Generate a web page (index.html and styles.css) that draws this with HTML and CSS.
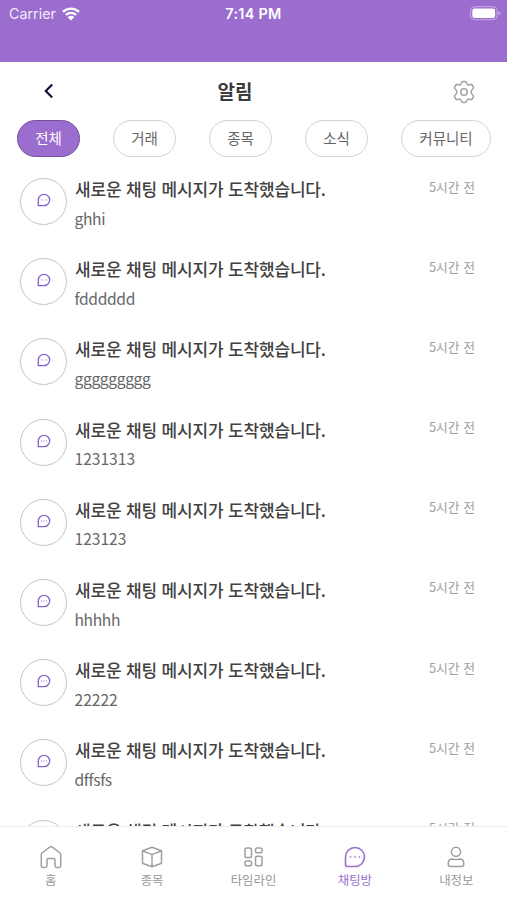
FILE: index.html
```html
<!DOCTYPE html>
<html lang="ko">
<head>
<meta charset="utf-8">
<title>알림</title>
<link rel="stylesheet" href="styles.css">
</head>
<body>
<svg class="defs" aria-hidden="true">
  <symbol id="chat" viewBox="0 0 22 22">
    <path d="M1.5 18.8V11A9.5 9.5 0 1 1 11 20.5H3.200Q1.500 20.500 1.500 18.800Z" fill="none" stroke="currentColor" stroke-width="1.6" stroke-linejoin="round"/>
    <g fill="currentColor" opacity=".75"><circle cx="6.5" cy="11" r=".9"/><circle cx="11" cy="11" r=".9"/><circle cx="15.5" cy="11" r=".9"/></g>
  </symbol>
  <symbol id="chat-small" viewBox="0 0 14 14">
    <path d="M1.300 12.700V7A5.700 5.700 0 1 1 7 12.700Z" fill="none" stroke="currentColor" stroke-width="1.300" stroke-linejoin="round"/>
    <g fill="currentColor" opacity=".55"><circle cx="4.400" cy="7" r=".7"/><circle cx="7" cy="7" r=".7"/><circle cx="9.600" cy="7" r=".7"/></g>
  </symbol>
</svg>
<div class="app">
  <header class="status">
    <div class="carrier">Carrier
      <svg width="18" height="14" viewBox="0 0 18 14"><path d="M1 4.8A11.5 11.5 0 0 1 17 4.8M3.9 8A7.4 7.4 0 0 1 14.1 8" fill="none" stroke="#fff" stroke-width="2.3"/><path d="M9 13.6 5.7 10.2A4.7 4.7 0 0 1 12.3 10.2Z" fill="#fff"/></svg>
    </div>
    <div class="clock">7:14 PM</div>
    <div class="battery"><svg width="31" height="15" viewBox="0 0 31 15"><rect x=".5" y=".7" width="26.5" height="13" rx="4" fill="none" stroke="#c4a9e2"/><rect x="2.3" y="2.5" width="22.8" height="9.4" rx="2.2" fill="#fff"/><path d="M28.3 5v4.6q1.9-.8 1.9-2.3T28.3 5Z" fill="#c4a9e2"/></svg></div>
  </header>
  <div class="titlebar">
    <svg class="back" width="12" height="16" viewBox="0 0 12 16"><path d="M9.2 1.5 2.8 8l6.400 6.500" fill="none" stroke="#10133f" stroke-width="2.2"/></svg>
    <h1>알림</h1>
    <svg class="gear" width="24" height="24" viewBox="0 0 24 24" fill="none" stroke="#a2a2a2" stroke-width="1.5" stroke-linejoin="round"><path d="M10.800 1.500h2.400q1.200 0 1.300 1.200.2 2 1.800 2.300.8.200 1.800-.4 1.300-.6 2 .4l1.200 2q.7 1.200-.4 2-1.700 1.200-1.700 3t1.700 3q1.100.8.4 2l-1.200 2q-.7 1-2 .4-1-.6-1.800-.4-1.600.3-1.800 2.300-.1 1.200-1.300 1.200h-2.400q-1.200 0-1.300-1.200-.2-2-1.800-2.300-.8-.2-1.800.4-1.300.6-2-.4l-1.200-2q-.7-1.200.4-2 1.700-1.200 1.700-3t-1.700-3q-1.100-.8-.4-2l1.200-2q.7-1 2-.4 1 .6 1.800.4 1.600-.3 1.800-2.300.1-1.200 1.300-1.200Z"/><circle cx="12" cy="12" r="3.300"/></svg>
  </div>
  <nav class="chips">
    <span class="chip active">전체</span><span class="chip">거래</span><span class="chip">종목</span><span class="chip">소식</span><span class="chip wide">커뮤니티</span>
  </nav>
  <main class="list">
    <article class="row"><div class="avatar"><svg><use href="#chat-small"/></svg></div><div class="body"><h2>새로운 채팅 메시지가 도착했습니다.</h2><p>ghhi</p></div><time>5시간 전</time></article>
    <article class="row"><div class="avatar"><svg><use href="#chat-small"/></svg></div><div class="body"><h2>새로운 채팅 메시지가 도착했습니다.</h2><p>fdddddd</p></div><time>5시간 전</time></article>
    <article class="row"><div class="avatar"><svg><use href="#chat-small"/></svg></div><div class="body"><h2>새로운 채팅 메시지가 도착했습니다.</h2><p>ggggggggg</p></div><time>5시간 전</time></article>
    <article class="row"><div class="avatar"><svg><use href="#chat-small"/></svg></div><div class="body"><h2>새로운 채팅 메시지가 도착했습니다.</h2><p class="num">1231313</p></div><time>5시간 전</time></article>
    <article class="row"><div class="avatar"><svg><use href="#chat-small"/></svg></div><div class="body"><h2>새로운 채팅 메시지가 도착했습니다.</h2><p class="num">123123</p></div><time>5시간 전</time></article>
    <article class="row"><div class="avatar"><svg><use href="#chat-small"/></svg></div><div class="body"><h2>새로운 채팅 메시지가 도착했습니다.</h2><p>hhhhh</p></div><time>5시간 전</time></article>
    <article class="row"><div class="avatar"><svg><use href="#chat-small"/></svg></div><div class="body"><h2>새로운 채팅 메시지가 도착했습니다.</h2><p class="num">22222</p></div><time>5시간 전</time></article>
    <article class="row"><div class="avatar"><svg><use href="#chat-small"/></svg></div><div class="body"><h2>새로운 채팅 메시지가 도착했습니다.</h2><p>dffsfs</p></div><time>5시간 전</time></article>
    <article class="row"><div class="avatar"></div><div class="body"><h2>새로운 채팅 메시지가 도착했습니다.</h2></div><time>5시간 전</time></article>
  </main>
  <footer class="tabs">
    <div class="tab"><svg viewBox="0 0 24 24"><path d="M2.300 9.500q0-.9.700-1.500L11 1.800q1-.7 2 0L21 8q.7.600.7 1.500v11.300q0 1.700-1.700 1.700h-2.300q-1.700 0-1.700-1.700v-5.500q0-1.700-1.700-1.700H9.700Q8 13.600 8 15.300v5.500q0 1.700-1.700 1.700H4q-1.700 0-1.700-1.700Z"/></svg>홈</div>
    <div class="tab"><svg viewBox="0 0 24 24"><path d="M12 2.300 21.500 5.800v12.400L12 21.700 2.500 18.200V5.800ZM2.500 5.800 12 9.600 21.500 5.800M12 9.600v12.100"/></svg>종목</div>
    <div class="tab"><svg viewBox="0 0 24 24"><rect x="4" y="3" width="6.500" height="9.500" rx="1.800"/><rect x="4" y="16" width="6.500" height="4.700" rx="1.800"/><rect x="14.500" y="3" width="6.500" height="4.700" rx="1.800"/><rect x="14.500" y="11.200" width="6.500" height="9.500" rx="1.800"/></svg>타임라인</div>
    <div class="tab on"><svg class="talk"><use href="#chat"/></svg>채팅방</div>
    <div class="tab"><svg viewBox="0 0 24 24"><circle cx="12" cy="6.800" r="4.600"/><path d="M4.300 19.500v-1.500q0-4 4-4 3.700 1.200 7.400 0 4 0 4 4v1.500q0 2-2 2H6.300q-2 0-2-2Z"/></svg>내정보</div>
  </footer>
</div>
</body>
</html>
```
FILE: styles.css
```css
* { box-sizing: border-box; }
body { margin: 0; background: #fff; font-family: "Noto Sans CJK KR", sans-serif; }
h1, h2, p { margin: 0; }
.defs { display: none; }
.app { width: 507px; height: 900px; display: flex; flex-direction: column; overflow: hidden; }
.status { flex: none; height: 62px; background: #9b6dce; color: #fff; display: grid; grid-template-columns: 1fr auto 1fr; align-items: start; padding: 5px 6px 0 9px; font: 14.3px/18px Inter, sans-serif; }
.carrier { display: flex; align-items: center; gap: 6px; color: #f3ebfb; }
.carrier svg { margin-top: -1px; }
.clock { font-weight: 600; font-size: 14.4px; letter-spacing: .3px; margin-right: 3px; }
.battery { justify-self: end; line-height: 0; padding-top: 1px; }
.titlebar { flex: none; height: 58px; display: flex; align-items: center; justify-content: space-between; padding: 0 31px 0 43px; }
.titlebar h1 { font-size: 19px; line-height: 28px; font-weight: 700; color: #3c3c3c; margin-left: -37px; }
.gear { margin-top: 1px; }
.chips { flex: none; display: flex; justify-content: space-between; padding: 0 16px 0 17px; height: 55px; }
.chip { width: 63px; height: 37px; border: 1px solid #d3d3d3; border-radius: 19px; font-size: 14.5px; line-height: 34px; text-align: center; color: #666; }
.chip.wide { width: 90px; }
.chip.active { background: #9b6dce; border-color: #75539b; color: #fff; }
.list { flex: 1; min-height: 0; overflow: hidden; padding-top: 2px; }
.row { height: 80.2px; display: flex; align-items: flex-start; padding: 1px 32px 0 20px; }
.avatar { flex: none; width: 47px; height: 47px; border: 1px solid #c4c4c4; border-radius: 50%; display: flex; align-items: center; justify-content: center; color: #8f5fcb; }
.avatar svg { width: 14px; height: 14px; margin-top: -3px; }
.body { flex: 1; padding-left: 8px; margin-top: -1px; white-space: nowrap; }
.body h2 { font-size: 17px; line-height: 24px; font-weight: 500; letter-spacing: -.17px; color: #424242; }
.body p { font-size: 15.6px; line-height: 24px; letter-spacing: -.35px; color: #666; margin-top: 4.600px; margin-left: -.5px; }
.body p.num { letter-spacing: 0; }
.row time { font-size: 12.8px; line-height: 18px; color: #a0a0a0; margin-top: -.5px; }
.tabs { flex: none; height: 74px; border-top: 1px solid #eee; display: grid; grid-template-columns: repeat(5, 1fr); padding-top: 18px; }
.tab { display: flex; flex-direction: column; align-items: center; font-size: 12.4px; line-height: 18px; color: #999; gap: 2px; }
.tab svg { width: 24px; height: 24px; fill: none; stroke: #a0a0a4; stroke-width: 1.5; stroke-linejoin: round; }
.tab svg.talk { width: 22px; height: 22px; margin: 1px 0; stroke: none; }
.tab.on { color: #9b6dce; }
```
